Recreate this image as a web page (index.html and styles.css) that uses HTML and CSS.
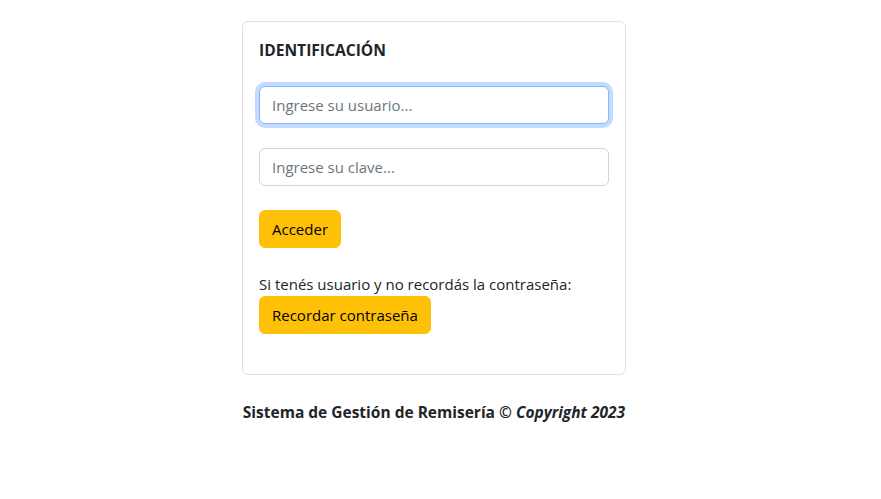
FILE: index.html
```html
<!DOCTYPE html>
<html lang="es">
<head>
  <meta charset="UTF-8" />
  <meta name="viewport" content="width=device-width, initial-scale=1" />
  <title>Identificación</title>
  <link rel="stylesheet" href="styles.css">
</head>
<body>
  <main class="login">
    <div class="card">
      <h5 class="card-title">IDENTIFICACIÓN</h5>
      <form>
        <input type="text" class="form-control focused" placeholder="Ingrese su usuario..." autofocus>
        <input type="password" class="form-control" placeholder="Ingrese su clave...">
        <button type="button" class="btn">Acceder</button>
      </form>
      <p class="olvido">Si tenés usuario y no recordás la contraseña:</p>
      <button type="button" class="btn">Recordar contraseña</button>
    </div>

    <p class="pie">Sistema de Gestión de Remisería © <em>Copyright 2023</em></p>
  </main>
</body>
</html>
```

FILE: styles.css
```css
body {
  margin: 0;
  padding-right: 13px;
  font-family: "Open Sans", "Noto Sans", sans-serif;
  font-size: 15px;
  line-height: 24px;
  color: #212529;
  background: #fff;
}

.login {
  width: 384px;
  margin: 21px auto 0;
}

.card {
  border: 1px solid #dfdfdf;
  border-radius: 6px;
  padding: 16px;
}

.card-title {
  margin: 0 0 24px;
  font-size: 15.6px;
  font-weight: bold;
  line-height: 24px;
}

form {
  display: flex;
  flex-direction: column;
  align-items: flex-start;
  gap: 24px;
}

.form-control {
  box-sizing: border-box;
  width: 100%;
  height: 38px;
  padding: 6px 12px;
  font: inherit;
  color: #212529;
  border: 1px solid #ced4da;
  border-radius: 6px;
  outline: none;
}

.form-control::placeholder {
  color: #6c757d;
}

.focused {
  border-color: #86b7fe;
  box-shadow: 0 0 0 4px rgba(13, 110, 253, 0.25);
}

.btn {
  height: 38px;
  padding: 6px 12px;
  font: inherit;
  color: #000;
  background: #ffc107;
  border: 1px solid #ffc107;
  border-radius: 6px;
  cursor: pointer;
}

.olvido {
  margin: 24px 0 0;
}

.card > .btn {
  margin-bottom: 24px;
}

.pie {
  margin: 25px 0 0;
  text-align: center;
  font-size: 15.5px;
  font-weight: bold;
  white-space: nowrap;
}
```
